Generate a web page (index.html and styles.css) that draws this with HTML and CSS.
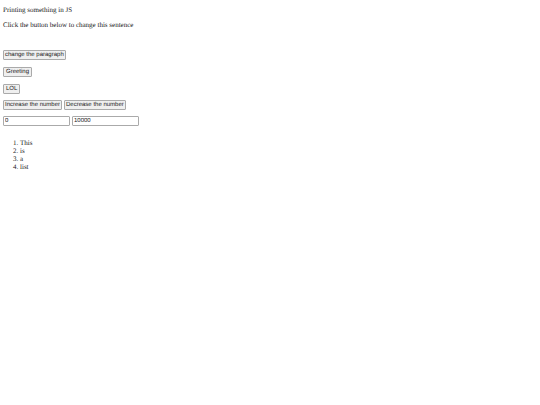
FILE: index.html
```html
<!DOCTYPE html>
<html lang="en">
<head>
    <meta charset="UTF-8">
    <meta name="viewport" content="width=device-width, initial-scale=1.0">
    <title>JS Practice</title>
    <link rel="stylesheet" href="styles.css">
</head>
<body>

    <p>Printing something in JS</p>
    <p id="sentence">Click the button below to change this sentence</p>

    <div class="buttons">
        <div class="row">
            <button type="button" class="long" onclick="changeParagraph()">change the paragraph</button>
        </div>
        <div class="row">
            <button type="button" onclick="greeting()">Greeting</button>
        </div>
        <div class="row">
            <button type="button" onclick="lol()">LOL</button>
        </div>
    </div>

    <div class="numbers">
        <div class="row">
            <button type="button" class="long" onclick="changeNumber(1)">Increase the number</button>
            <button type="button" class="long" onclick="changeNumber(-1)">Decrease the number</button>
        </div>
        <div class="row">
            <input type="text" id="increase" aria-label="Increasing number" value="0">
            <input type="text" id="decrease" aria-label="Decreasing number" value="10000">
        </div>
    </div>

    <ol>
        <li>This</li>
        <li>is</li>
        <li>a</li>
        <li>list</li>
    </ol>

    <script>

        function changeParagraph () {
            document.getElementById('sentence').innerText = "The sentence has changed";
        }

        function greeting () {
            window.alert("Hello!")
        }

        function lol () {
            window.alert("LOL")
        }

        function changeNumber (step) {
            const box = document.getElementById(step > 0 ? 'increase' : 'decrease');
            box.value = Number(box.value) + step;
        }

    </script>
</body>
</html>
```
FILE: styles.css
```css
* {
    box-sizing: border-box;
}

body {
    margin: 6px 3px;
    font-family: "Liberation Serif", "Times New Roman", serif;
    font-size: 7px;
    line-height: 8px;
    text-rendering: geometricPrecision;
    color: #222;
    background-color: white;
}

p {
    margin: 0 0 7px;
}

.buttons,
.numbers {
    display: flex;
    flex-direction: column;
    gap: 7px;
}

.buttons {
    margin-top: 21px;
}

.numbers {
    gap: 6px;
    margin-top: 6px;
}

.row {
    display: flex;
    gap: 2px;
}

button,
input {
    height: 10px;
    border: 1px solid #aaa;
    border-radius: 1px;
    font-family: "Liberation Sans", Arial, sans-serif;
    font-size: 6px;
    line-height: 8px;
    text-rendering: geometricPrecision;
    color: #222;
}

button {
    padding: 0 2px;
    background-color: #efefef;
}

.long {
    padding: 0 1px;
}

input {
    width: 67px;
    padding: 0 1px;
}

ol {
    margin: 13px 0;
    padding-left: 17px;
}
```
